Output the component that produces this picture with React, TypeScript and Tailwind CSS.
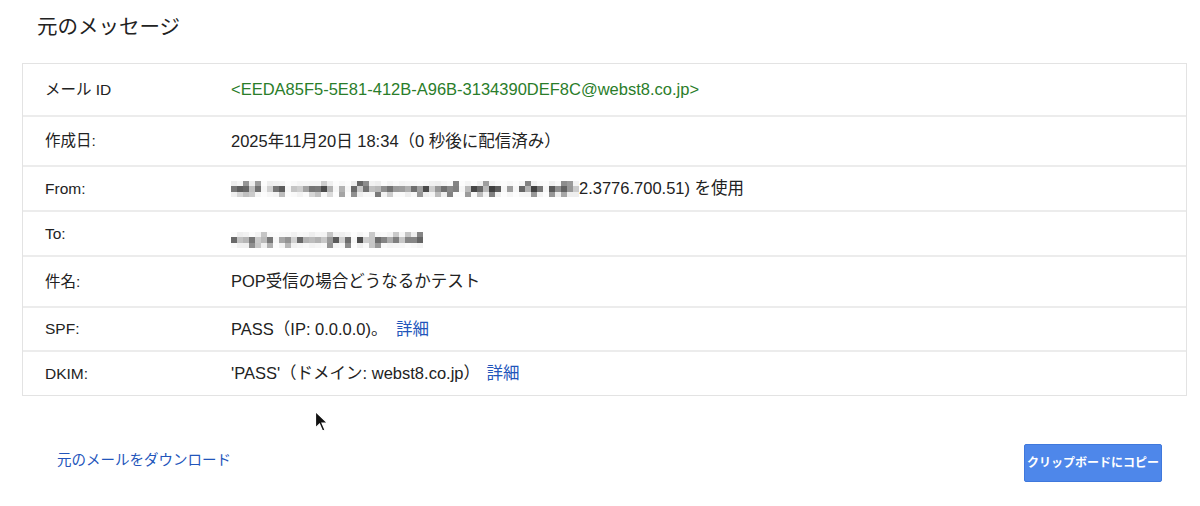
import React from 'react';

const FONT = { fontFamily: '"Liberation Sans", "Noto Sans CJK JP", Arial, sans-serif' };

/* ─── Pixelated (mosaic) redaction ─── */
function Mosaic({ cols, seed }: { cols: number; seed: number }) {
  let s = seed;
  const rnd = () => {
    s = (s * 9301 + 49297) % 233280;
    return s / 233280;
  };
  const cells: { top: number; mid: number; bot: number }[] = [];
  for (let i = 0; i < cols; i++) {
    const gap = rnd() < 0.12;
    cells.push({
      top: gap ? 252 : rnd() < 0.25 ? 90 + rnd() * 120 : 238 + rnd() * 14,
      mid: gap ? 246 : 60 + rnd() * 150,
      bot: gap ? 252 : rnd() < 0.2 ? 120 + rnd() * 100 : 238 + rnd() * 14,
    });
  }
  const g = (v: number) => `rgb(${v | 0},${v | 0},${v | 0})`;
  return (
    <span className="inline-flex flex-row blur-[0.4px]">
      {cells.map((c, i) => (
        <span key={i} className="flex flex-col w-[6px]">
          <span className="h-[5px]" style={{ backgroundColor: g(c.top) }} />
          <span className="h-[6px]" style={{ backgroundColor: g(c.mid) }} />
          <span className="h-[5px]" style={{ backgroundColor: g(c.bot) }} />
        </span>
      ))}
    </span>
  );
}

interface Row {
  label: string;
  value: React.ReactNode;
  h: string;
}

const rows: Row[] = [
  {
    label: 'メール ID',
    h: 'h-[51px]',
    value: <span className="text-[#2a7d2a]">&lt;EEDA85F5-5E81-412B-A96B-3134390DEF8C@webst8.co.jp&gt;</span>,
  },
  { label: '作成日:', h: 'h-[50px]', value: '2025年11月20日 18:34（0 秒後に配信済み）' },
  {
    label: 'From:',
    h: 'h-[45px]',
    value: (
      <span className="flex items-center">
        <Mosaic cols={58} seed={17} />
        <span>2.3776.700.51) を使用</span>
      </span>
    ),
  },
  { label: 'To:', h: 'h-[45px]', value: <Mosaic cols={32} seed={91} /> },
  { label: '件名:', h: 'h-[51px]', value: 'POP受信の場合どうなるかテスト' },
  {
    label: 'SPF:',
    h: 'h-[44px]',
    value: (
      <span>
        PASS（IP: 0.0.0.0)。 <a className="text-[#2255bb] ml-1">詳細</a>
      </span>
    ),
  },
  {
    label: 'DKIM:',
    h: 'h-[45px]',
    value: (
      <span>
        'PASS'（ドメイン: webst8.co.jp） <a className="text-[#2255bb] ml-[2px]">詳細</a>
      </span>
    ),
  },
];

export default function App() {
  return (
    <div className="relative w-[1200px] h-[506px] bg-white text-[#222] overflow-hidden" style={FONT}>
      {/* Title */}
      <h1 className="pl-[37px] pt-[14px] text-[20.5px] leading-[26px] text-[#222]">元のメッセージ</h1>

      {/* Header table */}
      <div className="ml-[22px] mt-[23px] w-[1165px] border border-[#e3e3e3]">
        {rows.map((r, i) => (
          <div
            key={r.label}
            className={`flex items-center ${r.h} ${i > 0 ? 'border-t-2 border-[#ececec]' : ''}`}
          >
            <div className="w-[208px] pl-[22px] shrink-0 text-[15.5px]">{r.label}</div>
            <div className="flex-1 text-[16.5px]">{r.value}</div>
          </div>
        ))}
      </div>

      {/* Footer actions */}
      <div className="flex items-center justify-between ml-[57px] mr-[38px] mt-[48px]">
        <a className="text-[14.5px] text-[#2255bb] -mt-[4px]">元のメールをダウンロード</a>
        <button className="w-[138px] h-[38px] rounded-[2px] bg-[#4e87ea] border border-[#3f78dc] text-white text-[12px] font-bold">
          クリップボードにコピー
        </button>
      </div>

      {/* Mouse pointer */}
      <svg className="absolute left-[314px] top-[410px]" width="16" height="24" viewBox="0 0 16 24">
        <path d="M1.5 1.5 L1.5 18 L5.5 14 L8.5 21 L11 20 L8 13 L13.5 13 Z" fill="#111" stroke="#fff" strokeWidth="1.2" />
      </svg>
    </div>
  );
}
